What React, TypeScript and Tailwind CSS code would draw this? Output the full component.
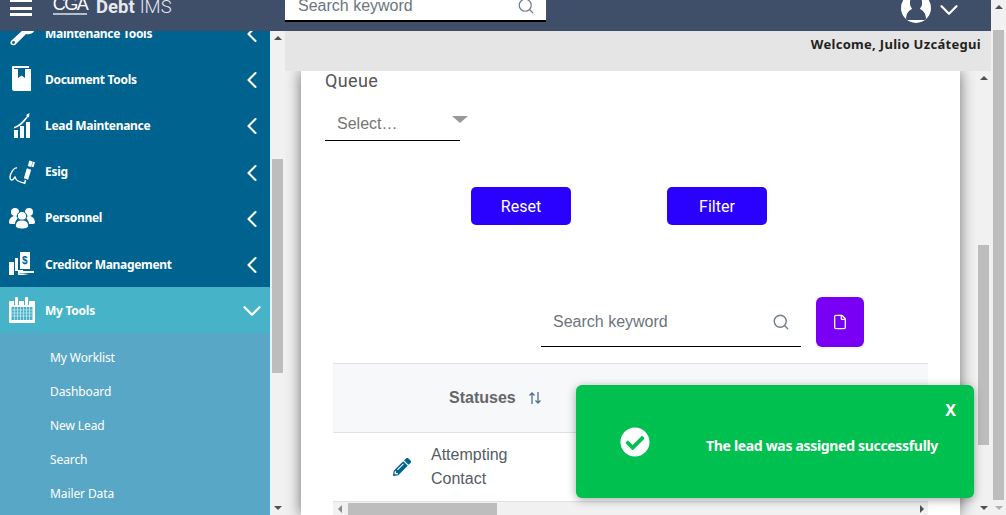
import { ChevronDown, ChevronLeft, File, Search } from "lucide-react";
import { FaCheckCircle, FaPencilAlt } from "react-icons/fa";
import type { ReactNode } from "react";

const ui = "font-['Noto_Sans',sans-serif]";

function WrenchIcon() {
  return (
    <svg viewBox="0 0 26 26" className="h-[26px] w-[26px]" fill="#fff">
      <path d="M2 21 L15 9 C15 5 18 1 25 1 L25 3 L20 6 L22 10 L26 9 C25 13 21 15 17 14 L6 25 C3 26 0 24 2 21 Z" />
      <circle cx="4.5" cy="22.5" r="1.4" fill="#00628f" />
    </svg>
  );
}

function BookIcon() {
  return (
    <svg viewBox="0 0 20 26" className="h-[26px] w-[20px]" fill="#fff">
      <path d="M1 0 H17 V2 H2 V3 H19 V25 H2 C1 25 0 24 0 23 V1 C0 .5 .5 0 1 0 Z" />
      <path d="M6 3 H13 V12 L9.5 9.5 L6 12 Z" fill="#00628f" />
    </svg>
  );
}

function ChartIcon() {
  return (
    <svg viewBox="0 0 16 25" className="h-[25px] w-[16px]" fill="#fff">
      <rect x="0" y="17" width="4" height="8" />
      <rect x="6" y="13" width="4" height="12" />
      <rect x="12" y="9" width="4" height="16" />
      <path d="M0 14 C5 12 9 8 13 3 L12 2 L15.5 0 L15 4.5 L14 3.8 C10 10 6 14 0 15.5 Z" />
    </svg>
  );
}

function EsigIcon() {
  return (
    <svg viewBox="0 0 26 26" className="h-[26px] w-[26px]" fill="none" stroke="#fff">
      <path d="M8 9 C5 8 1.5 14 1 18 C.7 21 3 22 5 19.5 C5.5 18 6 17 6.5 19 C7 22 10 23 15 24" strokeWidth="1.4" />
      <path d="M20 10 L17 20" strokeWidth="4.5" />
      <path d="M22 2 L20.5 7.5" strokeWidth="3.5" />
      <path d="M25 3 L23.5 8" strokeWidth="2" />
      <path d="M16.5 21 L15.5 25" strokeWidth="1.5" />
    </svg>
  );
}

function PeopleIcon() {
  return (
    <svg viewBox="0 0 26 22" className="h-[22px] w-[26px]" fill="#fff">
      <circle cx="6" cy="5" r="4" />
      <circle cx="20" cy="5" r="4" />
      <path d="M0 16 C0 11 3 9 6 9 C8 9 9 10 9 11 C7 13 6 15 6 17 C3 17 0 17 0 16 Z" />
      <path d="M26 16 C26 11 23 9 20 9 C18 9 17 10 17 11 C19 13 20 15 20 17 C23 17 26 17 26 16 Z" />
      <circle cx="13" cy="9" r="4.6" stroke="#00628f" />
      <path d="M6.5 19 C6.5 15 9 13 13 13 C17 13 19.5 15 19.5 19 C19.5 21 16 22 13 22 C10 22 6.5 21 6.5 19 Z" stroke="#00628f" />
    </svg>
  );
}

function CreditorIcon() {
  return (
    <svg viewBox="0 0 26 24" className="h-[24px] w-[26px]" fill="#fff">
      <path d="M0 10 H5 V23 H0 Z" />
      <path d="M6 6 H9 V19 H6 Z" />
      <path d="M11 0 H21 V17 H11 Z" />
      <path d="M7 21 H25 V19 H14 V18 H9 V23 H14 L20 22 Z" />
      <text x="13" y="12" fontSize="10" fontWeight="700" fill="#00628f" fontFamily="'Liberation Sans', sans-serif">$</text>
    </svg>
  );
}

function CalendarIcon() {
  return (
    <svg viewBox="0 0 26 26" className="h-[26px] w-[26px]" fill="#fff">
      <path d="M1 4 H5 V8 H10 V4 H15 V8 H20 V4 H25 C25.5 4 26 4.5 26 5 V25 C26 25.5 25.5 26 25 26 H1 C.5 26 0 25.5 0 25 V5 C0 4.5 .5 4 1 4 Z" />
      <rect x="6" y="0" width="3" height="8" rx="1" />
      <rect x="16" y="0" width="3" height="8" rx="1" />
      <rect x="2.5" y="10" width="21" height="13" fill="#46b3c9" />
      <path d="M2.5 13 H23.5 M2.5 16 H23.5 M2.5 19 H23.5 M5.5 10 V23 M8.5 10 V23 M11.5 10 V23 M14.5 10 V23 M17.5 10 V23 M20.5 10 V23" stroke="#fff" strokeWidth="0.7" opacity="0.75" />
    </svg>
  );
}

function CaretUp({ className = "" }: { className?: string }) {
  return <div className={`h-0 w-0 border-x-[4px] border-b-[4px] border-x-transparent border-b-[#505050] ${className}`} />;
}

function CaretDown({ className = "" }: { className?: string }) {
  return <div className={`h-0 w-0 border-x-[4px] border-t-[4px] border-x-transparent border-t-[#505050] ${className}`} />;
}

const menu: { label: string; icon: ReactNode }[] = [
  { label: "Maintenance Tools", icon: <WrenchIcon /> },
  { label: "Document Tools", icon: <BookIcon /> },
  { label: "Lead Maintenance", icon: <ChartIcon /> },
  { label: "Esig", icon: <EsigIcon /> },
  { label: "Personnel", icon: <PeopleIcon /> },
  { label: "Creditor Management", icon: <CreditorIcon /> },
];

const subMenu = ["My Worklist", "Dashboard", "New Lead", "Search", "Mailer Data"];

function Sidebar() {
  return (
    <aside className={`w-[270px] shrink-0 overflow-hidden bg-[#00628f] ${ui}`}>
      <div className="-mt-[21px]">
        {menu.map((item) => (
          <div key={item.label} className="flex h-[46.2px] items-center">
            <div className="flex w-[45px] shrink-0 justify-center pr-[1px]">{item.icon}</div>
            <span className="flex-1 pt-[1px] text-[12px] font-bold tracking-[-0.3px] text-white">{item.label}</span>
            <ChevronLeft className="mt-[2px] mr-[4px] h-[28px] w-[28px] text-white" strokeWidth={1.8} />
          </div>
        ))}
        <div className="flex h-[46.2px] items-center bg-[#46b3c9]">
          <div className="flex w-[45px] shrink-0 justify-center pr-[1px]">
            <CalendarIcon />
          </div>
          <span className="flex-1 pt-[1px] text-[12px] font-bold tracking-[-0.25px] text-white">My Tools</span>
          <ChevronDown className="mt-[1px] mr-[3px] h-[30px] w-[30px] text-white" strokeWidth={1.8} />
        </div>
        <div className="h-[200px] bg-[#59a7c6] pt-[8px] pl-[50px]">
          {subMenu.map((s) => (
            <div key={s} className="flex h-[34px] items-center text-[12px] tracking-[-0.1px] text-white">
              {s}
            </div>
          ))}
        </div>
      </div>
    </aside>
  );
}

function Header() {
  return (
    <header className="flex h-[31px] shrink-0 items-start overflow-hidden bg-[#3f4e69]">
      <div className="flex w-[43px] shrink-0 flex-col gap-[3px] pl-[10px]">
        <div className="mb-[2px] h-[2px] w-[22px] bg-white" />
        <div className="h-[3px] w-[22px] bg-white" />
        <div className="h-[3px] w-[22px] bg-white" />
      </div>
      <div className="-mt-[4px] ml-[5px] flex w-[44px] shrink-0 flex-col items-center">
        <span className="font-['Liberation_Sans',sans-serif] text-[18px] leading-[17px] tracking-[-1.5px] text-white">CGA</span>
        <div className="h-[2px] w-[34px] bg-[#b9bfca]" />
      </div>
      <div className="-mt-[3px] ml-[4px] flex w-[76px] shrink-0 gap-[5px] font-['Roboto',sans-serif] text-[18.5px] leading-[20px] text-[#e8e9ee]">
        <span className="font-bold">Debt</span>
        <span className="font-light">IMS</span>
      </div>
      <div className="ml-[113px] flex h-[22px] w-[261px] shrink-0 items-center border-b-2 border-black bg-white pr-[11px] pl-[13px] font-['Liberation_Sans',sans-serif]">
        <span className="-mt-[9px] flex-1 text-[16px] leading-[20px] text-[#6c757d]">Search keyword</span>
        <Search className="-mt-[9px] h-[18px] w-[18px] text-[#6c7d8d]" strokeWidth={1.6} />
      </div>
      <div className="ml-[355px] -mt-[7px] flex h-[30px] w-[30px] shrink-0 flex-col items-center overflow-hidden rounded-full bg-white">
        <div className="mt-[3px] h-[14px] w-[12px] rounded-full bg-[#3f4e69]" />
        <div className="-mt-[2px] h-[12px] w-[20px] rounded-t-full bg-[#3f4e69]" />
      </div>
      <ChevronDown className="-mt-[5px] ml-[3px] h-[30px] w-[30px] text-white" strokeWidth={1.8} />
    </header>
  );
}

function VScroll({ thumbTop, thumbHeight, muted }: { thumbTop: number; thumbHeight: number; muted?: boolean }) {
  return (
    <div className="relative w-[15px] shrink-0 bg-[#f1f1f1]">
      <CaretUp className="absolute top-[5px] left-[4px]" />
      <div className="absolute left-[2px] w-[11px] bg-[#bdbdbd]" style={{ top: thumbTop, height: thumbHeight }} />
      <CaretDown className={`absolute bottom-[5px] left-[4px] ${muted ? "opacity-40" : ""}`} />
    </div>
  );
}

function TableArea() {
  return (
    <div className="mx-[32px] mt-[16px]">
      <div className="flex justify-end pr-[64px]">
        <div className="flex h-[50px] w-[260px] items-center border-b border-black pr-[11px] pl-[12px] font-['Liberation_Sans',sans-serif]">
          <span className="flex-1 text-[16px] text-[#6c757d]">Search keyword</span>
          <Search className="h-[18px] w-[18px] text-[#6c7d8d]" strokeWidth={1.8} />
        </div>
        <div className="ml-[15px] flex h-[50px] w-[48px] items-center justify-center rounded-[6px] bg-[#7a00f5]">
          <File className="h-[16px] w-[16px] text-white" strokeWidth={2} />
        </div>
      </div>
      <div className="mt-[16px] border-t border-[#dee2e6] font-['Liberation_Sans',sans-serif]">
        <div className="flex h-[69px] items-center border-b border-[#dee2e6] bg-[#f7f8fa] pl-[116px]">
          <span className="text-[16px] font-bold text-[#666666]">Statuses</span>
          <svg viewBox="0 0 14 14" className="ml-[12px] h-[14px] w-[14px]" fill="none" stroke="#4f6f95" strokeWidth="1.3">
            <path d="M4 13 V2 M1.5 4.5 L4 2 L6.5 4.5" />
            <path d="M10 1 V12 M7.5 9.5 L10 12 L12.5 9.5" />
          </svg>
        </div>
        <div className="flex h-[69px] items-center border-b border-[#dee2e6] pl-[60px]">
          <FaPencilAlt className="h-[18px] w-[18px] text-[#00628f]" />
          <span className="ml-[20px] w-[90px] text-[16px] leading-[24px] text-[#555c66]">Attempting Contact</span>
        </div>
        <div className="relative flex h-[14px] items-center bg-[#f1f1f1]">
          <div className="ml-[5px] h-0 w-0 border-y-[4px] border-r-[4px] border-y-transparent border-r-[#8a8a8a]" />
          <div className="ml-[6px] h-[12px] w-[149px] bg-[#bdbdbd]" />
          <div className="ml-auto mr-[4px] h-0 w-0 border-y-[4px] border-l-[4px] border-y-transparent border-l-[#505050]" />
        </div>
      </div>
    </div>
  );
}

function Toast() {
  return (
    <div className={`absolute top-[385px] left-[576px] h-[113px] w-[398px] rounded-[6px] bg-[#00c04f] text-white shadow-[0_2px_10px_rgba(0,0,0,0.35)] ${ui}`}>
      <div className="flex h-full items-center pt-[1px]">
        <FaCheckCircle className="ml-[44px] h-[30px] w-[30px]" />
        <span className="ml-[56px] mt-[6px] whitespace-nowrap text-[14px] font-bold tracking-[-0.32px]">The lead was assigned successfully</span>
      </div>
      <span className="absolute top-[13px] right-[18px] text-[16px] font-bold">X</span>
    </div>
  );
}

export default function App() {
  return (
    <div className="relative flex h-[515px] w-[1006px] overflow-hidden bg-white">
      <div className="flex min-w-0 flex-1 flex-col">
        <Header />
        <div className="flex min-h-0 flex-1">
          <Sidebar />
          <VScroll thumbTop={128} thumbHeight={214} />
          <main className="flex min-w-0 flex-1 flex-col">
            <div className={`relative z-10 h-[40px] shrink-0 bg-[#e5e5e5] pt-[4px] pr-[10px] text-right text-[13px] font-bold tracking-[0.3px] text-[#222222] ${ui}`}>
              Welcome, Julio Uzcátegui
            </div>
            <div className="flex min-h-0 flex-1 bg-[#f1f1f1]">
              <div className="ml-[16px] w-[659px] shrink-0 bg-white shadow-[0_0_14px_rgba(0,0,0,0.55)]">
                <div className="pl-[24px]">
                  <div className="-mt-[1px] font-['Roboto',sans-serif] text-[18px] leading-[22px] tracking-[0.4px] text-[#555555]">Queue</div>
                  <div className="mt-[20px] flex h-[29px] w-[135px] items-start border-b border-black pl-[12px] font-['Liberation_Sans',sans-serif]">
                    <span className="mt-[1px] text-[16px] leading-[22px] text-[#757575]">Select…</span>
                    <div className="-mr-[8px] ml-auto mt-[4px] h-0 w-0 border-x-[8px] border-t-[7px] border-x-transparent border-t-[#999999]" />
                  </div>
                </div>
                <div className="mt-[46px] flex gap-[96px] pl-[170px] font-['Roboto',sans-serif]">
                  <div className="flex h-[38px] w-[100px] items-center justify-center rounded-[5px] bg-[#2a00ff] pt-[1px] text-[16px] text-white">Reset</div>
                  <div className="flex h-[38px] w-[100px] items-center justify-center rounded-[5px] bg-[#2a00ff] pt-[1px] text-[16px] text-white">Filter</div>
                </div>
                <div className="mt-[72px]">
                  <TableArea />
                </div>
              </div>
              <div className="flex-1" />
              <VScroll thumbTop={174} thumbHeight={200} />
            </div>
          </main>
        </div>
      </div>
      <VScroll thumbTop={30} thumbHeight={470} muted />
      <Toast />
    </div>
  );
}
